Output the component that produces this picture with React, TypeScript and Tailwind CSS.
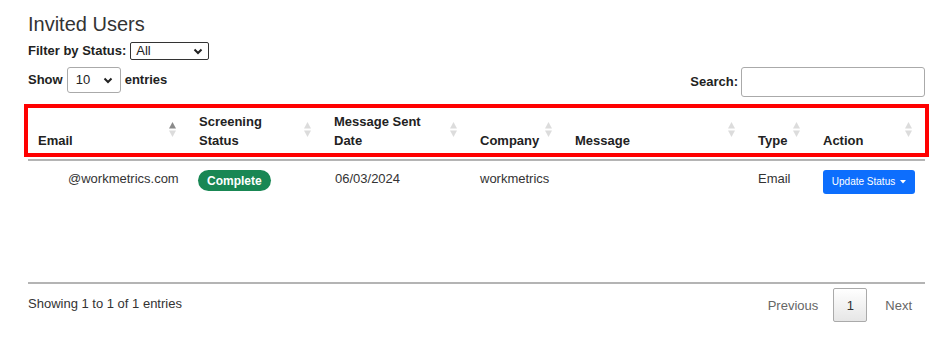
const columns = [
  { key: "email", label: ["Email"], active: true },
  { key: "status", label: ["Screening", "Status"] },
  { key: "sent", label: ["Message Sent", "Date"] },
  { key: "company", label: ["Company"] },
  { key: "message", label: ["Message"] },
  { key: "type", label: ["Type"] },
  { key: "action", label: ["Action"] },
];

const gridCols = "grid grid-cols-[161px_135px_146px_95px_183px_65px_112px]";

function SortArrows({ active }: { active?: boolean }) {
  return (
    <svg width="7" height="15" viewBox="0 0 7 15" className="self-center shrink-0">
      <polygon points="0,6.5 3.5,0 7,6.5" fill={active ? "#8a8a8a" : "#dcdcdc"} />
      <polygon points="0,8.5 3.5,15 7,8.5" fill="#dcdcdc" />
    </svg>
  );
}

function Chevron() {
  return (
    <svg width="10" height="7" viewBox="0 0 10 7">
      <path d="M1.5 1.5 L5 5 L8.5 1.5" fill="none" stroke="#222" strokeWidth="2" />
    </svg>
  );
}

export default function App() {
  return (
    <div className="w-[948px] h-[349px] overflow-hidden bg-white text-[#333] font-['Liberation_Sans',Arial,sans-serif]">
      <div className="pl-[28px] pr-[23px] pt-[12px]">
        <h1 className="text-[20px] leading-[24px] text-[#333]">Invited Users</h1>

        {/* status filter */}
        <div className="mt-[6px] flex items-center gap-[4px] h-[18px]">
          <span className="text-[13px] font-bold text-[#222]">Filter by Status:</span>
          <div className="w-[79px] h-[18px] border border-[#333] rounded-[2px] flex items-center justify-between pl-[5px] pr-[5px] text-[13px] text-[#222]">
            <span>All</span>
            <Chevron />
          </div>
        </div>

        {/* length + search */}
        <div className="mt-[7px] flex justify-between items-start">
          <div className="flex items-center gap-[4px] h-[26px] text-[13px] font-bold text-[#222]">
            <span>Show</span>
            <div className="w-[54px] h-[26px] border border-[#aaa] rounded-[3px] flex items-center justify-between pl-[8px] pr-[7px] font-normal">
              <span>10</span>
              <Chevron />
            </div>
            <span>entries</span>
          </div>
          <div className="flex items-center gap-[3px] h-[30px] text-[13px] font-bold text-[#222]">
            <span>Search:</span>
            <div className="w-[184px] h-[30px] border border-[#aaa] rounded-[3px] bg-white" />
          </div>
        </div>

        {/* highlighted header */}
        <div className="mt-[7px] -mx-[4px] border-4 border-[#ff0000]">
          <div className={`${gridCols} h-[45px] text-[13px] font-bold leading-[19px] text-[#222]`}>
            {columns.map((c) => (
              <div key={c.key} className="flex justify-between pl-[10px] pr-[13px] pb-[3px]">
                <span className="self-end">
                  {c.label.map((l, i) => (
                    <span key={i} className="block whitespace-nowrap">{l}</span>
                  ))}
                </span>
                <SortArrows active={c.active} />
              </div>
            ))}
          </div>
        </div>
        <div className="mt-[2px] h-[2px] bg-[#b4b4b4]" />

        {/* body */}
        <div className="h-[121px]">
          <div className={`${gridCols} pt-[9px] text-[13px] leading-[18px] text-[#333]`}>
            <div className="pl-[40px]">@workmetrics.com</div>
            <div className="pl-[9px]">
              <span className="inline-flex items-center h-[21px] px-[9px] rounded-full bg-[#198754] text-white text-[12px] font-bold">
                Complete
              </span>
            </div>
            <div className="pl-[11px]">06/03/2024</div>
            <div className="pl-[10px]">workmetrics</div>
            <div className="pl-[10px]" />
            <div className="pl-[10px]">Email</div>
            <div className="pl-[10px]">
              <button className="h-[24px] w-[92px] flex items-center justify-center gap-[5px] rounded-[3px] bg-[#0d6efd] text-white text-[10px]">
                Update Status
                <svg width="6" height="4" viewBox="0 0 6 4">
                  <polygon points="0,0 6,0 3,3.5" fill="#fff" />
                </svg>
              </button>
            </div>
          </div>
        </div>
        <div className="h-[2px] bg-[#b4b4b4]" />

        {/* footer */}
        <div className="mt-[4px] flex justify-between items-start text-[13px] leading-[19px]">
          <div className="pt-[6px] text-[#333]">Showing 1 to 1 of 1 entries</div>
          <div className="flex items-center">
            <span className="h-[34px] px-[13px] flex items-center text-[#666]">Previous</span>
            <span className="ml-[2px] h-[34px] w-[34px] flex items-center justify-center border border-[#aaa] rounded-[2px] bg-linear-to-b from-white to-[#e6e6e6] text-[#333]">
              1
            </span>
            <span className="ml-[5px] h-[34px] px-[13px] flex items-center text-[#666]">Next</span>
          </div>
        </div>
      </div>
    </div>
  );
}
